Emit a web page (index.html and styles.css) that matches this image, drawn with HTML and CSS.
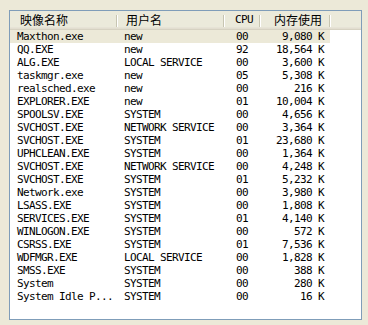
FILE: index.html
```html
<!DOCTYPE html>
<html>
<head>
<meta charset="utf-8">
<link rel="stylesheet" href="styles.css">
</head>
<body>
<div class="listview">
  <div class="header">
    <div class="hcell c1 cjk">映像名称</div>
    <div class="hcell c2 cjk">用户名</div>
    <div class="hcell c3 mono">CPU</div>
    <div class="hcell c4 cjk">内存使用</div>
    <div class="hcell rest"></div>
  </div>
  <div class="rows">
    <div class="row sel"><span class="c1">Maxthon.exe</span><span class="c2">new</span><span class="c3">00</span><span class="c4">9,080 K</span></div>
    <div class="row"><span class="c1">QQ.EXE</span><span class="c2">new</span><span class="c3">92</span><span class="c4">18,564 K</span></div>
    <div class="row"><span class="c1">ALG.EXE</span><span class="c2">LOCAL SERVICE</span><span class="c3">00</span><span class="c4">3,600 K</span></div>
    <div class="row"><span class="c1">taskmgr.exe</span><span class="c2">new</span><span class="c3">05</span><span class="c4">5,308 K</span></div>
    <div class="row"><span class="c1">realsched.exe</span><span class="c2">new</span><span class="c3">00</span><span class="c4">216 K</span></div>
    <div class="row"><span class="c1">EXPLORER.EXE</span><span class="c2">new</span><span class="c3">01</span><span class="c4">10,004 K</span></div>
    <div class="row"><span class="c1">SPOOLSV.EXE</span><span class="c2">SYSTEM</span><span class="c3">00</span><span class="c4">4,656 K</span></div>
    <div class="row"><span class="c1">SVCHOST.EXE</span><span class="c2">NETWORK SERVICE</span><span class="c3">00</span><span class="c4">3,364 K</span></div>
    <div class="row"><span class="c1">SVCHOST.EXE</span><span class="c2">SYSTEM</span><span class="c3">01</span><span class="c4">23,680 K</span></div>
    <div class="row"><span class="c1">UPHCLEAN.EXE</span><span class="c2">SYSTEM</span><span class="c3">00</span><span class="c4">1,364 K</span></div>
    <div class="row"><span class="c1">SVCHOST.EXE</span><span class="c2">NETWORK SERVICE</span><span class="c3">00</span><span class="c4">4,248 K</span></div>
    <div class="row"><span class="c1">SVCHOST.EXE</span><span class="c2">SYSTEM</span><span class="c3">01</span><span class="c4">5,232 K</span></div>
    <div class="row"><span class="c1">Network.exe</span><span class="c2">SYSTEM</span><span class="c3">00</span><span class="c4">3,980 K</span></div>
    <div class="row"><span class="c1">LSASS.EXE</span><span class="c2">SYSTEM</span><span class="c3">00</span><span class="c4">1,808 K</span></div>
    <div class="row"><span class="c1">SERVICES.EXE</span><span class="c2">SYSTEM</span><span class="c3">01</span><span class="c4">4,140 K</span></div>
    <div class="row"><span class="c1">WINLOGON.EXE</span><span class="c2">SYSTEM</span><span class="c3">00</span><span class="c4">572 K</span></div>
    <div class="row"><span class="c1">CSRSS.EXE</span><span class="c2">SYSTEM</span><span class="c3">01</span><span class="c4">7,536 K</span></div>
    <div class="row"><span class="c1">WDFMGR.EXE</span><span class="c2">LOCAL SERVICE</span><span class="c3">00</span><span class="c4">1,828 K</span></div>
    <div class="row"><span class="c1">SMSS.EXE</span><span class="c2">SYSTEM</span><span class="c3">00</span><span class="c4">388 K</span></div>
    <div class="row"><span class="c1">System</span><span class="c2">SYSTEM</span><span class="c3">00</span><span class="c4">280 K</span></div>
    <div class="row"><span class="c1">System Idle P...</span><span class="c2">SYSTEM</span><span class="c3">00</span><span class="c4">16 K</span></div>
  </div>
</div>
</body>
</html>
```
FILE: styles.css
```css
html, body {
  margin: 0;
  padding: 0;
  background: #ECE9D8;
}
body {
  padding: 10px 0 0 9px;
}
.listview {
  box-sizing: border-box;
  width: 353px;
  height: 310px;
  border: 1px solid #7F9DB9;
  background: #FFFFFF;
  overflow: hidden;
}
.header {
  display: flex;
  height: 19px;
  background: #EBEADB;
  box-shadow: inset 0 -1px #D6D2C2, inset 0 -2px #E2DED0, inset 0 -3px #E6E3D6;
}
.hcell {
  box-sizing: border-box;
  height: 19px;
  line-height: 18px;
  color: #000;
  position: relative;
  white-space: nowrap;
}
.hcell::after {
  content: "";
  position: absolute;
  right: 0;
  top: 4px;
  height: 12px;
  width: 1px;
  background: #C7C5B2;
  box-shadow: 1px 0 #FFFFFF;
}
.hcell.rest::after { display: none; }
.cjk {
  font-family: "Noto Sans CJK SC", sans-serif;
  font-size: 12px;
}
.mono {
  font-family: "DejaVu Sans Mono", monospace;
  font-size: 11px;
  letter-spacing: -0.62px;
}
.c1 { width: 107px; }
.c2 { width: 107px; }
.c3 { width: 36px; }
.c4 { width: 70px; }
.rest { flex: 1; }
.hcell.c1 { padding-left: 10px; }
.hcell.c2 { padding-left: 9px; }
.hcell.c3 { padding-left: 11px; }
.hcell.c4 { padding-right: 8px; text-align: right; }
.row {
  display: flex;
  width: 320px;
  height: 13px;
  line-height: 14px;
  font-family: "DejaVu Sans Mono", monospace;
  font-size: 11px;
  letter-spacing: -0.62px;
  color: #000;
  white-space: pre;
}
.row.sel {
  background: #ECE9D8;
}
.row span {
  box-sizing: border-box;
  display: block;
  overflow: hidden;
}
.row .c1 { padding-left: 7px; }
.row .c2 { padding-left: 7px; }
.row .c3 { padding-left: 12px; }
.row .c4 { padding-right: 6px; text-align: right; }
```
